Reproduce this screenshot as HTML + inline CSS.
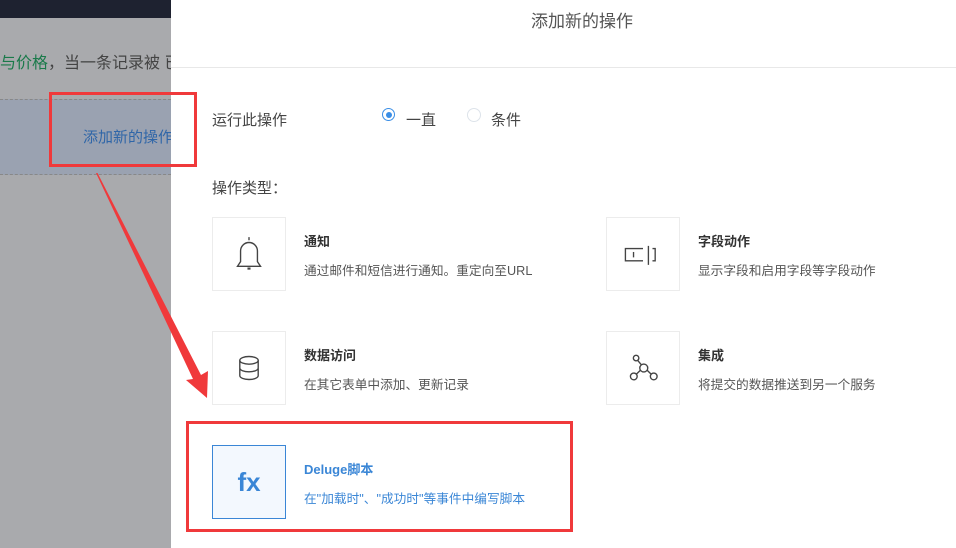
<!DOCTYPE html><html><head><meta charset="utf-8"><style>
body{margin:0;width:956px;height:548px;position:relative;overflow:hidden;font-family:"Liberation Sans","Noto Sans CJK SC",sans-serif;background:#a9aaad}
.abs{position:absolute}
.card{position:absolute;width:74px;height:74px;border:1px solid #ececec;background:#fff;box-sizing:border-box;display:flex;align-items:center;justify-content:center}
.t{position:absolute;font-size:13px;font-weight:bold;color:#333}
.d{position:absolute;font-size:12.7px;color:#555}
</style></head><body>
<div class="abs" style="left:0;top:0;width:171px;height:18px;background:#1e2230"></div>
<div class="abs" style="left:0;top:49px;font-size:16px;color:#444;white-space:nowrap"><span style="color:#1a7a4a">与价格</span>，当一条记录被 已</div>
<div class="abs" style="left:0;top:99px;width:171px;height:76px;background:#9aa2b1;border-top:1px dashed #888;border-bottom:1px dashed #888;box-sizing:border-box"></div>
<div class="abs" style="left:83px;top:126px;font-size:15px;color:#2f66a8;white-space:nowrap">添加新的操作</div>
<div class="abs" style="left:171px;top:0;width:785px;height:548px;background:#fff"></div>
<div class="abs" style="left:171px;top:67px;width:785px;height:1px;background:#e8e8e8"></div>
<div class="abs" style="left:531px;top:7px;font-size:17px;color:#555">添加新的操作</div>
<div class="abs" style="left:212px;top:109px;font-size:15px;color:#444">运行此操作</div>
<div class="abs" style="left:382px;top:108px;width:13px;height:13px;border:1px solid #3a8ee6;border-radius:50%;box-sizing:border-box"><div style="margin:2.5px;width:6px;height:6px;border-radius:50%;background:#3a8ee6"></div></div>
<div class="abs" style="left:406px;top:109px;font-size:15px;color:#444">一直</div>
<div class="abs" style="left:467px;top:108px;width:14px;height:14px;border:1px solid #dde3ea;border-radius:50%;box-sizing:border-box"></div>
<div class="abs" style="left:491px;top:109px;font-size:15px;color:#444">条件</div>
<div class="abs" style="left:212px;top:177px;font-size:15px;color:#444">操作类型：</div>

<div class="card" style="left:212px;top:217px"><svg width="46" height="46" viewBox="0 0 30 30" fill="none" stroke="#444" stroke-width="0.9"><path d="M15 4v2M9.5 20V13a5.5 5.5 0 0 1 11 0v7l2 3h-15z"/><path d="M14 24.5h2" stroke-width="1.4"/></svg></div>
<div class="t" style="left:304px;top:231px">通知</div>
<div class="d" style="left:304px;top:260px">通过邮件和短信进行通知。重定向至URL</div>
<div class="card" style="left:606px;top:217px"><svg width="46" height="46" viewBox="0 0 34 34" fill="none" stroke="#444" stroke-width="1"><path d="M21 11v14M17 13H4v9h13M24 13h2v9h-2"/><path d="M10 15.5v4"/></svg></div>
<div class="t" style="left:698px;top:231px">字段动作</div>
<div class="d" style="left:698px;top:260px">显示字段和启用字段等字段动作</div>

<div class="card" style="left:212px;top:331px"><svg width="46" height="46" viewBox="0 0 30 30" fill="none" stroke="#444" stroke-width="0.9"><ellipse cx="15" cy="10" rx="6" ry="2.5"/><path d="M9 10v10c0 1.4 2.7 2.5 6 2.5s6-1.1 6-2.5V10M9 15c0 1.4 2.7 2.5 6 2.5s6-1.1 6-2.5"/></svg></div>
<div class="t" style="left:304px;top:345px">数据访问</div>
<div class="d" style="left:304px;top:374px">在其它表单中添加、更新记录</div>
<div class="card" style="left:606px;top:331px"><svg width="46" height="46" viewBox="0 0 30 30" fill="none" stroke="#444" stroke-width="0.9"><circle cx="10.5" cy="8.5" r="1.8"/><circle cx="15.5" cy="15" r="2.6"/><circle cx="9" cy="20.5" r="2.2"/><circle cx="22" cy="20.5" r="2.2"/><path d="M11.5 10l2.5 3M13.3 16.5l-2.6 2.5M17.7 16.5l2.6 2.5"/></svg></div>
<div class="t" style="left:698px;top:345px">集成</div>
<div class="d" style="left:698px;top:374px">将提交的数据推送到另一个服务</div>

<div class="abs" style="left:186px;top:421px;width:387px;height:111px;border:3px solid #f0393b;box-sizing:border-box"></div>
<div class="card" style="left:212px;top:445px;border-color:#3a86d6;background:#f3f8fe"><span style="font-size:26px;font-weight:bold;color:#3a86d6">fx</span></div>
<div class="t" style="left:304px;top:459px;color:#3a86d6">Deluge脚本</div>
<div class="d" style="left:304px;top:488px;color:#3a86d6">在"加载时"、"成功时"等事件中编写脚本</div>

<div class="abs" style="left:49px;top:92px;width:148px;height:75px;border:3px solid #f0393b;box-sizing:border-box"></div>
<svg class="abs" style="left:0;top:0" width="956" height="548"><polygon points="96,173 97.5,173 201,375 208,371 207,398 186,380 193,379" fill="#f0393b"/></svg>
</body></html>
